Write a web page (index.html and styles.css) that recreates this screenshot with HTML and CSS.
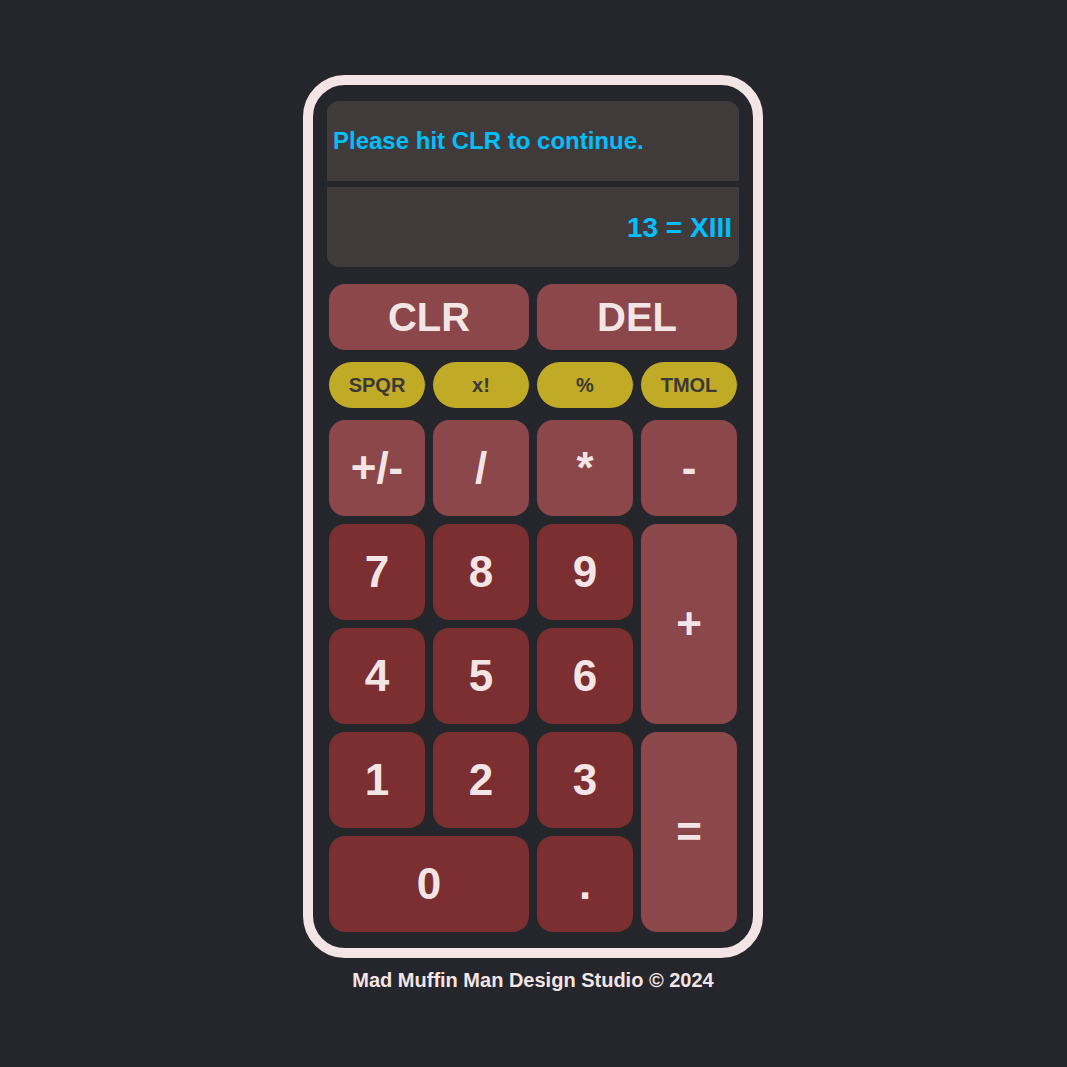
FILE: index.html
```html
<!DOCTYPE html>
<html lang="en">
<head>
<meta charset="utf-8">
<title>Roman Calculator</title>
<link rel="stylesheet" href="styles.css">
</head>
<body>
<main class="page">
  <div class="calculator">
    <div class="display">
      <div class="screen screen-top">Please hit CLR to continue.</div>
      <div class="screen screen-bottom">13 = XIII</div>
    </div>
    <div class="controls">
      <button class="key key-op key-wide">CLR</button>
      <button class="key key-op key-wide">DEL</button>
    </div>
    <div class="specials">
      <button class="pill">SPQR</button>
      <button class="pill">x!</button>
      <button class="pill">%</button>
      <button class="pill">TMOL</button>
    </div>
    <div class="keypad">
      <button class="key key-op">+/-</button>
      <button class="key key-op">/</button>
      <button class="key key-op">*</button>
      <button class="key key-op">-</button>
      <button class="key key-num">7</button>
      <button class="key key-num">8</button>
      <button class="key key-num">9</button>
      <button class="key key-op key-tall">+</button>
      <button class="key key-num">4</button>
      <button class="key key-num">5</button>
      <button class="key key-num">6</button>
      <button class="key key-num">1</button>
      <button class="key key-num">2</button>
      <button class="key key-num">3</button>
      <button class="key key-op key-tall">=</button>
      <button class="key key-num key-span2">0</button>
      <button class="key key-num">.</button>
    </div>
  </div>
  <footer class="footer">Mad Muffin Man Design Studio &copy; 2024</footer>
</main>
</body>
</html>
```

FILE: styles.css
```css
* { box-sizing: border-box; }
html, body {
  margin: 0;
  padding: 0;
  background: #25262b;
  font-family: "Liberation Sans", Arial, sans-serif;
}
.page {
  display: flex;
  flex-direction: column;
  align-items: center;
  padding-top: 75px;
  padding-right: 1px;
}
.calculator {
  width: 460px;
  border: 10px solid #f3e5e5;
  border-radius: 42px;
  background: #25262b;
  padding: 16px 14px 16px 14px;
}
.display {
  display: flex;
  flex-direction: column;
  gap: 6px;
}
.screen {
  height: 80px;
  background: #413a3a;
  color: #00bfff;
  font-weight: bold;
  display: flex;
  align-items: center;
}
.screen-top {
  border-radius: 12px 12px 0 0;
  font-size: 24px;
  padding-left: 6px;
}
.screen-bottom {
  border-radius: 0 0 12px 12px;
  font-size: 28px;
  justify-content: flex-end;
  padding-right: 7px;
  padding-top: 1px;
}
button {
  border: none;
  font-family: inherit;
  font-weight: bold;
  cursor: pointer;
  padding: 0;
}
.controls, .specials, .keypad {
  margin: 0 2px;
  display: grid;
  grid-template-columns: repeat(4, 96px);
  column-gap: 8px;
}
.controls {
  margin-top: 17px;
  grid-template-columns: repeat(2, 200px);
}
.specials {
  margin-top: 12px;
}
.keypad {
  margin-top: 12px;
  grid-auto-rows: 96px;
  row-gap: 8px;
}
.key {
  color: #f3e5e5;
  border-radius: 16px;
  font-size: 44px;
  display: flex;
  align-items: center;
  justify-content: center;
}
.key-wide {
  height: 66px;
  font-size: 40px;
}
.key-op { background: #8b4749; }
.key-num { background: #7b2f30; }
.key-tall { grid-row: span 2; }
.key-span2 { grid-column: span 2; }
.pill {
  height: 46px;
  border-radius: 23px;
  background: #c1aa26;
  color: #3b3838;
  font-size: 20px;
}
.footer {
  margin-top: 11px;
  color: #f3e5e5;
  font-weight: bold;
  font-size: 20px;
}
```
